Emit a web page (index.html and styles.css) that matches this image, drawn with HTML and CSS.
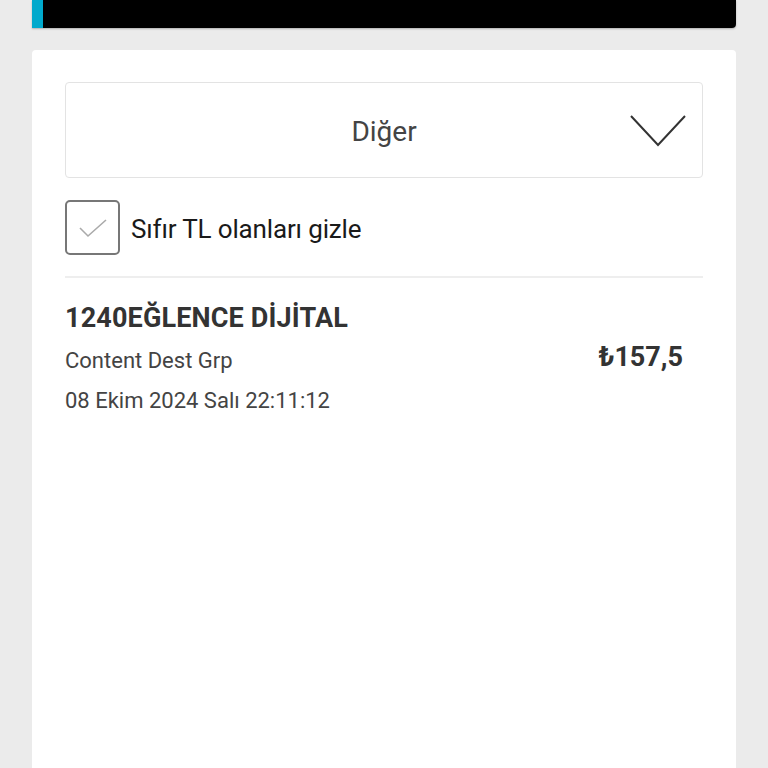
FILE: index.html
```html
<!DOCTYPE html>
<html lang="tr">
<head>
<meta charset="utf-8">
<link rel="stylesheet" href="styles.css">
</head>
<body>
<div class="page">
  <div class="topbar"><div class="accent"></div><div class="black"></div></div>
  <div class="card">
    <div class="select">
      <span class="select-text">Diğer</span>
      <svg class="chev" width="58" height="34" viewBox="0 0 58 34"><polyline points="2,2 29,31 56,2" fill="none" stroke="#333" stroke-width="2"/></svg>
    </div>
    <label class="check-row">
      <span class="box"><svg width="30" height="22" viewBox="0 0 30 22"><polyline points="2,11 10,19 28,3" fill="none" stroke="#aaa" stroke-width="1.6"/></svg></span>
      <span class="check-label">Sıfır TL olanları gizle</span>
    </label>
    <div class="divider"></div>
    <div class="item">
      <div class="item-left">
        <div class="item-title">1240EĞLENCE DİJİTAL</div>
        <div class="item-sub">Content Dest Grp</div>
        <div class="item-date">08 Ekim 2024 Salı 22:11:12</div>
      </div>
      <div class="item-price">₺157,5</div>
    </div>
  </div>
</div>
</body>
</html>
```
FILE: styles.css
```css
html, body { margin: 0; padding: 0; }
body {
  background: #ebebeb;
  font-family: Roboto, "Liberation Sans", sans-serif;
  width: 768px;
  height: 768px;
  overflow: hidden;
}
.page { padding: 0 32px; }
.topbar {
  display: flex;
  height: 28px;
  border-radius: 0 0 4px 0;
  overflow: hidden;
  box-shadow: 0 1px 2px rgba(0,0,0,0.25);
}
.accent { width: 11px; background: #00a9cc; }
.black { flex: 1; background: #000; }
.card {
  margin-top: 22px;
  background: #fff;
  border-radius: 4px 4px 0 0;
  padding: 32px 33px 0 33px;
  height: 700px;
}
.select {
  height: 94px;
  border: 1px solid #e3e3e3;
  border-radius: 4px;
  display: flex;
  align-items: center;
  justify-content: center;
  position: relative;
}
.select-text { font-size: 28px; color: #444; margin-top: 2px; }
.chev { position: absolute; right: 15px; top: 31px; }
.check-row {
  display: flex;
  align-items: center;
  margin-top: 22px;
  gap: 11px;
}
.box {
  width: 51px;
  height: 51px;
  border: 2px solid #777;
  border-radius: 5px;
  display: flex;
  align-items: center;
  justify-content: center;
}
.check-label { font-size: 26px; color: #1a1a1a; letter-spacing: -0.15px; margin-top: 3px; }
.divider { height: 2px; background: #eeeeee; margin-top: 21px; }
.item {
  display: flex;
  justify-content: space-between;
  padding-top: 24px;
}
.item-title { font-size: 27px; font-weight: 700; color: #333; letter-spacing: 0.15px; }
.item-sub { font-size: 22px; color: #444; margin-top: 14px; }
.item-date { font-size: 22px; color: #444; margin-top: 15px; }
.item-price { font-size: 27px; font-weight: 700; color: #333; margin-top: 39px; margin-right: 20px; }
```
